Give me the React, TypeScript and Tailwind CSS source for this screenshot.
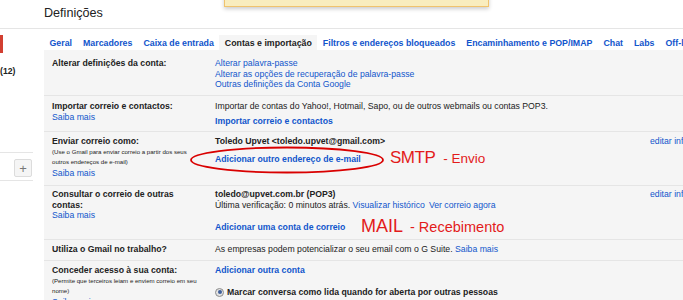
import React from "react";

const link = "text-[#15c]";

function Tab({ label, active }: { label: string; active?: boolean }) {
  return (
    <div
      className={
        "h-[15px] px-[5.5px] pt-[3px] whitespace-nowrap font-bold " +
        (active ? "bg-[#f5f5f5] text-[#222]" : "text-[#15c]")
      }
    >
      {label}
    </div>
  );
}

function Row({
  label,
  children,
  edit,
  className,
}: {
  label: React.ReactNode;
  children: React.ReactNode;
  edit?: boolean;
  className: string;
}) {
  return (
    <div className={"flex border-b border-[#e5e5e5] pl-[8px] " + className}>
      <div className="w-[163px] shrink-0 pr-[16px]">{label}</div>
      <div className="flex-1 min-w-0">{children}</div>
      <div className="w-[85px] shrink-0 whitespace-nowrap">
        {edit && <span className={link}>editar informações</span>}
      </div>
    </div>
  );
}

export default function App() {
  return (
    <div className="relative w-[683px] h-[300px] overflow-hidden bg-white text-[#222] text-[8.7px] leading-[10.5px] font-['Liberation_Sans',Arial,sans-serif]">
      {/* yellow notice, mostly scrolled off the top */}
      <div className="absolute left-[224px] top-[-15px] w-[265px] h-[22px] bg-[#f9edbe] border border-[#f0c36d] shadow-[0_2px_4px_rgba(0,0,0,0.2)] overflow-hidden">
        <div className="absolute left-0 right-0 top-[4px] text-center font-bold text-[9px] leading-[11px] whitespace-nowrap">
          As suas preferências foram guardadas. Saiba mais sobre a conta
        </div>
      </div>

      {/* page heading */}
      <header className="h-[29px] border-b border-[#e5e5e5] pl-[44px] pt-[6px] text-[12.6px] leading-[15px]">
        Definições
      </header>

      <div className="flex">
        {/* left nav, cut off */}
        <aside className="w-[44px] shrink-0">
          <div className="mt-[6px] w-[2.5px] h-[18px] bg-[#d23f31]" />
          <div className="mt-[13px] font-bold">(12)</div>
          <div className="mt-[75.5px] w-[33px] h-[29px] border-y border-[#e5e5e5] flex justify-end pr-[1px] pt-[6px]">
            <div className="w-[18px] h-[18px] border border-[#dcdcdc] bg-[#f5f5f5] rounded-[2px] flex items-center justify-center text-[#777] text-[13px] leading-none">
              +
            </div>
          </div>
        </aside>

        <main className="w-[691px] shrink-0">
          {/* tabs */}
          <div className="flex mt-[6px] text-[8.8px]">
            <Tab label="Geral" />
            <Tab label="Marcadores" />
            <Tab label="Caixa de entrada" />
            <Tab label="Contas e importação" active />
            <Tab label="Filtros e endereços bloqueados" />
            <Tab label="Encaminhamento e POP/IMAP" />
            <Tab label="Chat" />
            <Tab label="Labs" />
            <Tab label="Off-line" />
            <Tab label="Temas" />
          </div>

          {/* settings table */}
          <div className="bg-[#f5f5f5]">
            <Row className="pt-[8px] pb-[5.5px]" label={<b>Alterar definições da conta:</b>}>
              <div className={link}>Alterar palavra-passe</div>
              <div className={link}>Alterar as opções de recuperação de palavra-passe</div>
              <div className={link}>Outras definições da Conta Google</div>
            </Row>

            <Row
              className="pt-[5px] pb-[4.5px]"
              label={
                <>
                  <b>Importar correio e contactos:</b>
                  <div className={link}>Saiba mais</div>
                </>
              }
            >
              <div className="whitespace-nowrap">
                Importar de contas do Yahoo!, Hotmail, Sapo, ou de outros webmails ou contas POP3.
              </div>
              <div className={"mt-[4.5px] font-bold " + link}>Importar correio e contactos</div>
            </Row>

            <Row
              edit
              className="pt-[4px] pb-[7px]"
              label={
                <>
                  <b>Enviar correio como:</b>
                  <div className="text-[6.1px] w-[147px]">
                    (Use o Gmail para enviar correio a partir dos seus outros endereços de e-mail)
                  </div>
                  <div className={link}>Saiba mais</div>
                </>
              }
            >
              <div className="font-bold">Toledo Upvet &lt;toledo.upvet@gmail.com&gt;</div>
              <div className={"mt-[7.5px] font-bold " + link}>Adicionar outro endereço de e-mail</div>
            </Row>

            <Row
              edit
              className="pt-[3px] pb-[7px]"
              label={
                <>
                  <b className="block w-[147px]">Consultar o correio de outras contas:</b>
                  <div className={link}>Saiba mais</div>
                </>
              }
            >
              <div className="font-bold">toledo@upvet.com.br (POP3)</div>
              <div className="whitespace-nowrap">
                Última verificação: 0 minutos atrás. <span className={link}>Visualizar histórico</span>
                <span className={"ml-[4px] " + link}>Ver correio agora</span>
              </div>
              <div className={"mt-[11.5px] font-bold " + link}>Adicionar uma conta de correio</div>
            </Row>

            <Row className="pt-[4px] pb-[5px]" label={<b>Utiliza o Gmail no trabalho?</b>}>
              <div className="whitespace-nowrap">
                As empresas podem potencializar o seu email com o G Suite.{" "}
                <span className={link}>Saiba mais</span>
              </div>
            </Row>

            <Row
              className="pt-[4.5px] pb-[8px]"
              label={
                <>
                  <b>Conceder acesso à sua conta:</b>
                  <div className="text-[6.1px] w-[147px]">
                    (Permite que terceiros leiam e enviem correio em seu nome)
                  </div>
                  <div className={link}>Saiba mais</div>
                </>
              }
            >
              <div className={"font-bold " + link}>Adicionar outra conta</div>
              <div className="mt-[11.5px] flex items-center gap-[3px] font-bold whitespace-nowrap">
                <span className="w-[9px] h-[9px] rounded-full border border-[#8c8c8c] bg-[#e3e3e3] flex items-center justify-center">
                  <span className="w-[4px] h-[4px] rounded-full bg-[#3f5f9a]" />
                </span>
                Marcar conversa como lida quando for aberta por outras pessoas
              </div>
            </Row>
          </div>
        </main>
      </div>

      {/* red annotations drawn over the screenshot */}
      <svg className="absolute left-[189px] top-[146px]" width="196" height="28" viewBox="0 0 196 28">
        <ellipse cx="98" cy="14" rx="96" ry="12.5" fill="none" stroke="#d90000" strokeWidth="1.8" />
      </svg>
      <div className="absolute left-[390px] top-[148px] text-[#e31b1b] whitespace-nowrap flex items-baseline">
        <span className="text-[17px] leading-[20px] tracking-[-0.5px]">SMTP</span>
        <span className="ml-[8px] text-[13.5px] leading-[20px]">- Envio</span>
      </div>
      <div className="absolute left-[361px] top-[216px] text-[#e31b1b] whitespace-nowrap flex items-baseline">
        <span className="text-[18px] leading-[20px]">MAIL</span>
        <span className="ml-[7px] text-[14.5px] leading-[20px]">- Recebimento</span>
      </div>
    </div>
  );
}
